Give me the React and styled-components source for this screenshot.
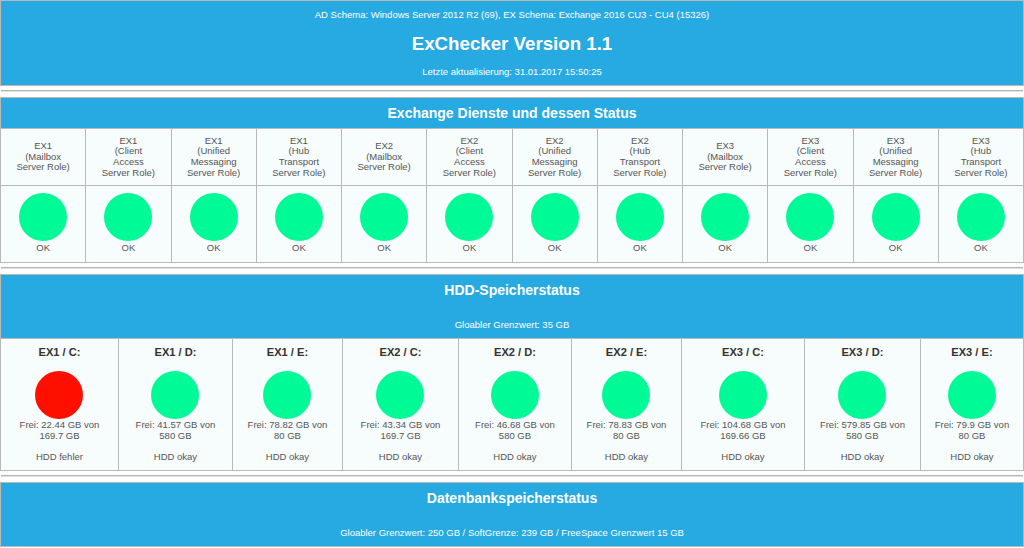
import React from 'react';
import styled, { createGlobalStyle } from 'styled-components';

const Global = createGlobalStyle`
  html, body { margin: 0; padding: 0; background: #ffffff; }
  body { font-family: "Liberation Sans", Arial, sans-serif; }
`;

const Page = styled.div`
  display: flex;
  flex-direction: column;
  width: 1024px;
`;

const Banner = styled.header`
  background: #27aae1;
  border: 1px solid #b9b9b9;
  color: #ffffff;
  text-align: center;
`;

const SchemaLine = styled.div`
  font-size: 9.5px;
  line-height: 28px;
`;

const Title = styled.h1`
  margin: 0;
  font-size: 18.7px;
  line-height: 30px;
  font-weight: bold;
`;

const UpdatedLine = styled.div`
  font-size: 9.5px;
  line-height: 26px;
`;

const Rule = styled.hr`
  margin: 4px 1px 5px;
  height: 0;
  border: 0;
  border-top: 1px solid #b4b4b4;
  border-bottom: 1px solid #e2e2e2;
`;

const Section = styled.section`
  border: 1px solid #b9b9b9;
`;

const SectionHead = styled.div`
  background: #27aae1;
  color: #ffffff;
  text-align: center;
  padding-bottom: ${(p) => (p.$withNote ? '6px' : '0')};
`;

const SectionTitle = styled.h2`
  margin: 0;
  font-size: 14px;
  line-height: 30px;
  font-weight: bold;
`;

const SectionNote = styled.div`
  font-size: 9.5px;
  line-height: 14px;
  margin-top: 13px;
`;

const Grid = styled.div`
  display: grid;
  grid-template-columns: ${(p) => p.$cols};
  grid-template-rows: ${(p) => p.$rows || 'auto'};
  gap: 1px;
  background: #b9b9b9;
  border-top: 1px solid #b9b9b9;
`;

const RoleCell = styled.div`
  background: #f7fcfc;
  display: flex;
  flex-direction: column;
  justify-content: center;
  align-items: center;
  text-align: center;
  font-size: 9.5px;
  line-height: 10.7px;
  color: #555555;
`;

const StatusCell = styled.div`
  background: #f7fcfc;
  display: flex;
  flex-direction: column;
  align-items: center;
  padding: 7px 0 0;
  font-size: 9.5px;
  line-height: 11px;
  color: #555555;
`;

const Dot = styled.span`
  display: block;
  width: 48px;
  height: 48px;
  border-radius: 50%;
  background: ${(p) => (p.$bad ? '#ff0f00' : '#00fa96')};
  margin-bottom: ${(p) => p.$after || '0'};
  margin-top: ${(p) => p.$before || '0'};
  flex: none;
`;

const DriveCell = styled.div`
  background: #f7fcfc;
  display: flex;
  flex-direction: column;
  align-items: center;
  text-align: center;
  padding: 5px 2px 8px;
  font-size: 9.5px;
  line-height: 11px;
  color: #555555;
`;

const DriveName = styled.div`
  font-size: 11.1px;
  line-height: 16px;
  font-weight: bold;
  color: #333333;
`;

const DriveState = styled.div`
  margin-top: 10px;
`;

const roles = [
  ['(Mailbox', 'Server Role)'],
  ['(Client', 'Access', 'Server Role)'],
  ['(Unified', 'Messaging', 'Server Role)'],
  ['(Hub', 'Transport', 'Server Role)'],
];

const servers = ['EX1', 'EX2', 'EX3'];

const services = servers.flatMap((s) => roles.map((r) => [s, ...r]));

const drives = [
  { name: 'EX1 / C:', free: '22.44', total: '169.7', bad: true },
  { name: 'EX1 / D:', free: '41.57', total: '580' },
  { name: 'EX1 / E:', free: '78.82', total: '80' },
  { name: 'EX2 / C:', free: '43.34', total: '169.7' },
  { name: 'EX2 / D:', free: '46.68', total: '580' },
  { name: 'EX2 / E:', free: '78.83', total: '80' },
  { name: 'EX3 / C:', free: '104.68', total: '169.66' },
  { name: 'EX3 / D:', free: '579.85', total: '580' },
  { name: 'EX3 / E:', free: '79.9', total: '80' },
];

const driveCols = '118fr 114fr 110fr 116fr 113fr 110fr 123fr 116fr 103fr';

export default function App() {
  return (
    <Page>
      <Global />
      <Banner>
        <SchemaLine>
          AD Schema: Windows Server 2012 R2 (69), EX Schema: Exchange 2016 CU3 - CU4 (15326)
        </SchemaLine>
        <Title>ExChecker Version 1.1</Title>
        <UpdatedLine>Letzte aktualisierung: 31.01.2017 15:50:25</UpdatedLine>
      </Banner>
      <Rule />
      <Section>
        <SectionHead>
          <SectionTitle>Exchange Dienste und dessen Status</SectionTitle>
        </SectionHead>
        <Grid $cols="repeat(12, 1fr)" $rows="56px 76px">
          {services.map((lines, i) => (
            <RoleCell key={'r' + i}>
              {lines.map((l, j) => (
                <span key={j}>{l}</span>
              ))}
            </RoleCell>
          ))}
          {services.map((_, i) => (
            <StatusCell key={'s' + i}>
              <Dot $after="1px" />
              <span>OK</span>
            </StatusCell>
          ))}
        </Grid>
      </Section>
      <Rule />
      <Section>
        <SectionHead $withNote>
          <SectionTitle>HDD-Speicherstatus</SectionTitle>
          <SectionNote>Gloabler Grenzwert: 35 GB</SectionNote>
        </SectionHead>
        <Grid $cols={driveCols}>
          {drives.map((d) => (
            <DriveCell key={d.name}>
              <DriveName>{d.name}</DriveName>
              <Dot $bad={d.bad} $before="11px" />
              <span>Frei: {d.free} GB von</span>
              <span>{d.total} GB</span>
              <DriveState>{d.bad ? 'HDD fehler' : 'HDD okay'}</DriveState>
            </DriveCell>
          ))}
        </Grid>
      </Section>
      <Rule />
      <Section>
        <SectionHead $withNote>
          <SectionTitle>Datenbankspeicherstatus</SectionTitle>
          <SectionNote>
            Gloabler Grenzwert: 250 GB / SoftGrenze: 239 GB / FreeSpace Grenzwert 15 GB
          </SectionNote>
        </SectionHead>
      </Section>
    </Page>
  );
}
